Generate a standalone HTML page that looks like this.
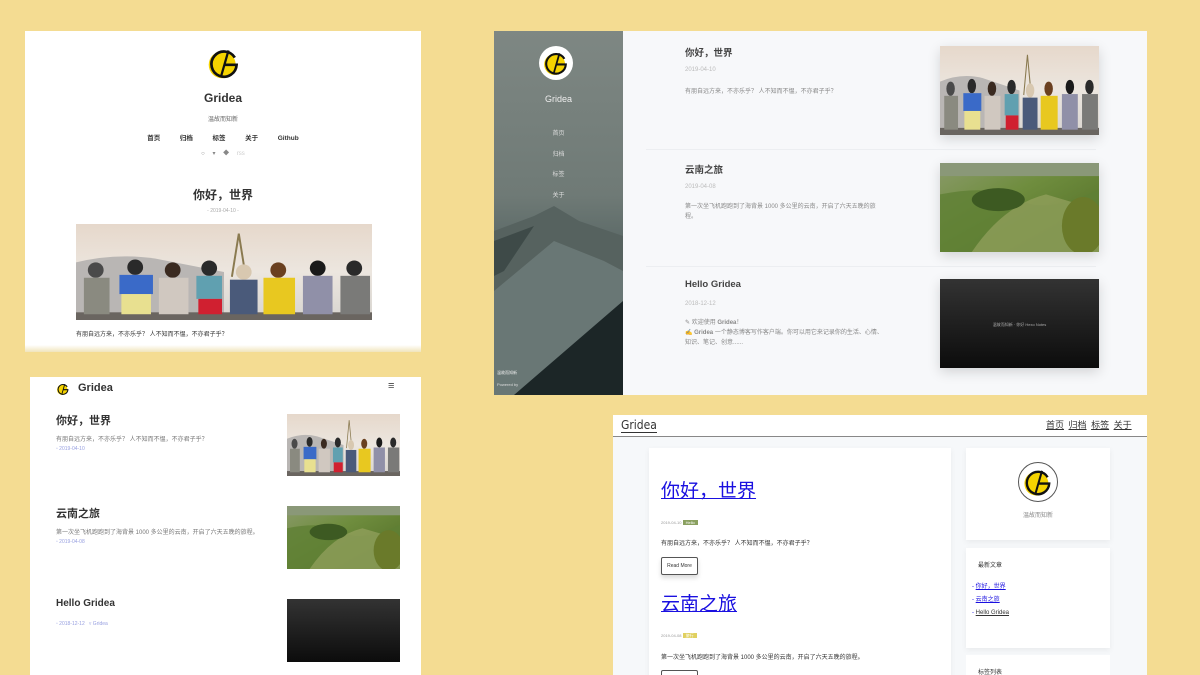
<!DOCTYPE html>
<html><head><meta charset="utf-8">
<style>
*{margin:0;padding:0;box-sizing:border-box}
body{width:1200px;height:675px;background:#f4dc92;position:relative;overflow:hidden;font-family:"Liberation Sans","Noto Sans CJK SC",sans-serif;color:#333}
.a{position:absolute}
.panel{position:absolute;background:#fff;overflow:hidden}
.t{position:absolute;white-space:nowrap}
svg.img{position:absolute;display:block}
</style></head><body>
<svg width="0" height="0" style="position:absolute">
<defs>
<linearGradient id="sky" x1="0" y1="0" x2="0" y2="1"><stop offset="0" stop-color="#e6d8cb"/><stop offset="0.5" stop-color="#ece6df"/><stop offset="1" stop-color="#d8d5d0"/></linearGradient>
<linearGradient id="grn" x1="0" y1="0" x2="1" y2="1"><stop offset="0" stop-color="#8a9a6a"/><stop offset="0.4" stop-color="#6f8d3e"/><stop offset="1" stop-color="#4e6a24"/></linearGradient>
<linearGradient id="drk" x1="0" y1="0" x2="0" y2="1"><stop offset="0" stop-color="#333"/><stop offset="1" stop-color="#0c0c0c"/></linearGradient>
<symbol id="people" viewBox="0 0 300 100" preserveAspectRatio="none">
<rect width="300" height="100" fill="url(#sky)"/>
<path d="M0 40 Q40 30 80 36 L150 50 L150 100 L0 100Z" fill="#b9b6b4"/>
<path d="M165 10 L158 55 M165 10 L172 55" stroke="#8a7a50" stroke-width="2"/>
<rect x="0" y="92" width="300" height="8" fill="#6a6560"/>
<g>
<circle cx="20" cy="48" r="8" fill="#4a4a4a"/><rect x="8" y="56" width="26" height="38" fill="#8a8a80"/>
<circle cx="60" cy="45" r="8" fill="#2a2a2a"/><rect x="44" y="53" width="34" height="20" fill="#3a6ac8"/><rect x="46" y="73" width="30" height="21" fill="#e8e090"/>
<circle cx="98" cy="48" r="8" fill="#3a2a20"/><rect x="84" y="56" width="30" height="38" fill="#d0c8c0"/>
<circle cx="135" cy="46" r="8" fill="#2a2a2a"/><rect x="122" y="54" width="26" height="24" fill="#60a0b0"/><rect x="124" y="78" width="24" height="16" fill="#d02030"/>
<circle cx="170" cy="50" r="8" fill="#d8c8b0"/><rect x="156" y="58" width="28" height="36" fill="#4a5a7a"/>
<circle cx="205" cy="48" r="8" fill="#6a4020"/><rect x="190" y="56" width="32" height="38" fill="#e8c820"/>
<circle cx="245" cy="46" r="8" fill="#1a1a1a"/><rect x="230" y="54" width="30" height="40" fill="#9090a8"/>
<circle cx="282" cy="46" r="8" fill="#2a2a2a"/><rect x="268" y="54" width="30" height="40" fill="#7a7a78"/>
</g>
</symbol>
<symbol id="green" viewBox="0 0 300 170" preserveAspectRatio="none">
<rect width="300" height="170" fill="url(#grn)"/>
<rect width="300" height="25" fill="#8a9878"/>
<path d="M0 60 Q100 40 150 70 T300 50 L300 170 L0 170Z" fill="#5f7f34" opacity=".8"/>
<path d="M60 170 Q120 80 200 60 L300 90 L300 170Z" fill="#9fa868" opacity=".6"/>
<ellipse cx="110" cy="70" rx="50" ry="22" fill="#3d5a22"/>
<ellipse cx="270" cy="120" rx="40" ry="55" fill="#6a7a2a"/>
</symbol>
<symbol id="dark" viewBox="0 0 300 170" preserveAspectRatio="none">
<rect width="300" height="170" fill="url(#drk)"/>
</symbol>
<symbol id="logo" viewBox="0 0 40 40">
<circle cx="18" cy="22" r="15" fill="#f5d300"/>
<path d="M32 14 A14 14 0 1 0 34 22 L20 22" fill="none" stroke="#111" stroke-width="3"/>
<path d="M25 6 L17 34" stroke="#111" stroke-width="2.5"/>
</symbol>
</defs></svg>

<!-- Panel 1 -->
<div class="panel" style="left:25px;top:31px;width:396px;height:321px">
<svg class="img" style="left:181px;top:14px" width="36" height="36"><use href="#logo"/></svg>
<div class="t" style="left:0;width:396px;text-align:center;top:60px;font-size:12px;font-weight:bold;color:#333">Gridea</div>
<div class="t" style="left:0;width:396px;text-align:center;top:83px;font-size:6px;color:#666">温故而知新</div>
<div class="t" style="left:0;width:396px;text-align:center;top:101px;font-size:6.5px;font-weight:bold;color:#333;word-spacing:8px">首页 &nbsp;归档 &nbsp;标签 &nbsp;关于 &nbsp;Github</div>
<div class="t" style="left:0;width:396px;text-align:center;top:117px;font-size:6px;color:#888;word-spacing:6px">○ ▾ ◆ <span style="color:#ccc">rss</span></div>
<div class="t" style="left:0;width:396px;text-align:center;top:155px;font-size:12px;font-weight:bold;color:#333">你好，世界</div>
<div class="t" style="left:0;width:396px;text-align:center;top:177px;font-size:5px;color:#aaa">- 2019-04-10 -</div>
<svg class="img" style="left:51px;top:193px" width="296" height="96"><use href="#people"/></svg>
<div class="t" style="left:51px;top:298px;font-size:6px;color:#333">有朋自远方来，不亦乐乎？ 人不知而不愠，不亦君子乎？</div>
<div class="a" style="left:0;top:314px;width:396px;height:7px;background:linear-gradient(#fff,#f0e4bc)"></div>
</div>

<!-- Panel 2 -->
<div class="panel" style="left:494px;top:31px;width:653px;height:364px;background:#f7f8fa">
<div class="a" style="left:0;top:0;width:129px;height:364px;background:linear-gradient(180deg,#7e8783 0%,#6f7a76 45%,#5a6866 60%,#3e4b4b 80%,#1e2828 100%)"></div>
<svg class="img" style="left:0;top:170px" width="129" height="194" viewBox="0 0 129 194" preserveAspectRatio="none">
<path d="M0 30 L40 15 L60 5 L85 20 L129 35 L129 194 L0 194Z" fill="#56625f"/>
<path d="M0 90 L60 40 L110 60 L129 70 L129 140 L40 194 L0 194Z" fill="#7a8886" opacity=".55"/>
<path d="M0 40 L40 25 L10 70 L0 75Z" fill="#3e4a48"/>
<path d="M20 194 L129 100 L129 194Z" fill="#1c2627"/>
</svg>
<div class="a" style="left:45px;top:15px;width:34px;height:34px;border-radius:50%;background:#fff"></div>
<svg class="img" style="left:48px;top:18px" width="28" height="28"><use href="#logo"/></svg>
<div class="t" style="left:0;width:129px;text-align:center;top:63px;font-size:9px;color:#eee">Gridea</div>
<div class="t" style="left:0;width:129px;text-align:center;top:97px;font-size:6px;color:#ddd">首页</div>
<div class="t" style="left:0;width:129px;text-align:center;top:118px;font-size:6px;color:#ddd">归档</div>
<div class="t" style="left:0;width:129px;text-align:center;top:138px;font-size:6px;color:#ddd">标签</div>
<div class="t" style="left:0;width:129px;text-align:center;top:159px;font-size:6px;color:#ddd">关于</div>
<div class="t" style="left:3px;top:339px;font-size:4px;color:#eee">温故而知新</div>
<div class="t" style="left:3px;top:351px;font-size:4px;color:#ddd">Powered by</div>

<div class="t" style="left:191px;top:14px;font-size:9.5px;font-weight:bold;color:#444">你好，世界</div>
<div class="t" style="left:191px;top:36px;font-size:6px;color:#bbb">2019-04-10</div>
<div class="t" style="left:191px;top:55px;font-size:6px;color:#888">有朋自远方来，不亦乐乎？ 人不知而不愠，不亦君子乎？</div>
<div class="a" style="left:152px;top:118px;width:450px;height:1px;background:#eceef1"></div>
<div class="t" style="left:191px;top:131px;font-size:9.5px;font-weight:bold;color:#444">云南之旅</div>
<div class="t" style="left:191px;top:153px;font-size:6px;color:#bbb">2019-04-08</div>
<div class="t" style="left:191px;top:171px;font-size:6px;color:#888;line-height:10px">第一次坐飞机跑跑到了海背景 1000 多公里的云南，开启了六天五晚的旅<br>程。</div>
<div class="a" style="left:152px;top:235px;width:450px;height:1px;background:#eceef1"></div>
<div class="t" style="left:191px;top:248px;font-size:9.5px;font-weight:bold;color:#444">Hello Gridea</div>
<div class="t" style="left:191px;top:270px;font-size:6px;color:#bbb">2018-12-12</div>
<div class="t" style="left:191px;top:287px;font-size:6px;color:#888;line-height:10px">✎ 欢迎使用 <b>Gridea</b>！<br>✍ <b>Gridea</b> 一个静态博客写作客户端。你可以用它来记录你的生活、心情、<br>知识、笔记、创意......</div>
<svg class="img" style="left:446px;top:15px;box-shadow:0 4px 12px rgba(0,0,0,.15)" width="159" height="89"><use href="#people"/></svg>
<svg class="img" style="left:446px;top:132px;box-shadow:0 4px 12px rgba(0,0,0,.15)" width="159" height="89"><use href="#green"/></svg>
<svg class="img" style="left:446px;top:248px;box-shadow:0 4px 12px rgba(0,0,0,.15)" width="159" height="89"><use href="#dark"/></svg>
<div class="t" style="left:446px;width:159px;text-align:center;top:291px;font-size:4px;color:#aaa">温故而知新 · 你好 Hexo Notes</div>
</div>

<!-- Panel 3 -->
<div class="panel" style="left:30px;top:377px;width:391px;height:298px">
<svg class="img" style="left:26px;top:5px" width="14" height="14"><use href="#logo"/></svg>
<div class="t" style="left:48px;top:5px;font-size:11px;font-weight:bold;color:#333">Gridea</div>
<div class="t" style="left:358px;top:3px;font-size:11px;color:#444">≡</div>
<div class="t" style="left:26px;top:35px;font-size:11px;font-weight:bold;color:#333">你好，世界</div>
<div class="t" style="left:26px;top:57px;font-size:6px;color:#777">有朋自远方来，不亦乐乎？ 人不知而不愠，不亦君子乎？</div>
<div class="t" style="left:26px;top:69px;font-size:5px;color:#98a0e0">▫ 2019-04-10</div>
<div class="t" style="left:26px;top:128px;font-size:11px;font-weight:bold;color:#333">云南之旅</div>
<div class="t" style="left:26px;top:150px;font-size:6px;color:#777">第一次坐飞机跑跑到了海背景 1000 多公里的云南，开启了六天五晚的旅程。</div>
<div class="t" style="left:26px;top:162px;font-size:5px;color:#98a0e0">▫ 2019-04-08</div>
<div class="t" style="left:26px;top:221px;font-size:10px;font-weight:bold;color:#333">Hello Gridea</div>
<div class="t" style="left:26px;top:244px;font-size:5px;color:#98a0e0">▫ 2018-12-12 &nbsp; ▿ Gridea</div>
<svg class="img" style="left:257px;top:37px" width="113" height="62"><use href="#people"/></svg>
<svg class="img" style="left:257px;top:129px" width="113" height="63"><use href="#green"/></svg>
<svg class="img" style="left:257px;top:222px" width="113" height="63"><use href="#dark"/></svg>
</div>

<!-- Panel 4 -->
<div class="panel" style="left:613px;top:415px;width:534px;height:260px;background:#f6f8fa">
<div class="a" style="left:0;top:0;width:534px;height:22px;background:#fff;border-bottom:1px solid #888"></div>
<div class="t" style="left:8px;top:3px;font-size:12px;color:#333;font-family:'DejaVu Sans Condensed','DejaVu Sans',sans-serif;border-bottom:1px solid #333">Gridea</div>
<div class="t" style="left:433px;top:3px;font-size:9px;color:#333;word-spacing:2px"><u>首页</u> <u>归档</u> <u>标签</u> <u>关于</u></div>
<div class="a" style="left:36px;top:33px;width:302px;height:240px;background:#fff;box-shadow:0 2px 6px rgba(0,0,0,.06)"></div>
<div class="t" style="left:48px;top:61px;font-size:19px;color:#1a10e0;text-decoration:underline">你好，世界</div>
<div class="t" style="left:48px;top:105px;font-size:4px;color:#999">2019-04-10 <span style="background:#8aa060;color:#fff;padding:0 3px">Hello</span></div>
<div class="t" style="left:48px;top:123px;font-size:6px;color:#333">有朋自远方来，不亦乐乎？ 人不知而不愠，不亦君子乎？</div>
<div class="a" style="left:48px;top:142px;width:37px;height:18px;border:1px solid #555;border-radius:2px;box-shadow:0 3px 5px rgba(0,0,0,.15);font-size:5px;text-align:center;line-height:16px;color:#333">Read More</div>
<div class="t" style="left:48px;top:174px;font-size:19px;color:#1a10e0;text-decoration:underline">云南之旅</div>
<div class="t" style="left:48px;top:218px;font-size:4px;color:#999">2019-04-08 <span style="background:#e0d060;color:#fff;padding:0 3px">旅行</span></div>
<div class="t" style="left:48px;top:237px;font-size:6px;color:#333">第一次坐飞机跑跑到了海背景 1000 多公里的云南，开启了六天五晚的旅程。</div>
<div class="a" style="left:48px;top:255px;width:37px;height:18px;border:1px solid #555;border-radius:2px"></div>
<div class="a" style="left:353px;top:33px;width:144px;height:92px;background:#fff;box-shadow:0 2px 6px rgba(0,0,0,.06)"></div>
<div class="a" style="left:405px;top:47px;width:40px;height:40px;border-radius:50%;border:1px solid #555;background:#fff"></div>
<svg class="img" style="left:409px;top:51px" width="32" height="32"><use href="#logo"/></svg>
<div class="t" style="left:353px;width:144px;text-align:center;top:95px;font-size:6px;color:#888">温故而知新</div>
<div class="a" style="left:353px;top:133px;width:144px;height:100px;background:#fff;box-shadow:0 2px 6px rgba(0,0,0,.06)"></div>
<div class="t" style="left:365px;top:145px;font-size:6px;color:#333">最新文章</div>
<div class="t" style="left:359px;top:166px;font-size:6px;color:#1a10e0;line-height:13px">- <u>你好，世界</u><br>- <u>云南之旅</u><br>- <u style="color:#333">Hello Gridea</u></div>
<div class="a" style="left:353px;top:240px;width:144px;height:30px;background:#fff"></div>
<div class="t" style="left:365px;top:252px;font-size:6px;color:#333">标签列表</div>
</div>
</body></html>
